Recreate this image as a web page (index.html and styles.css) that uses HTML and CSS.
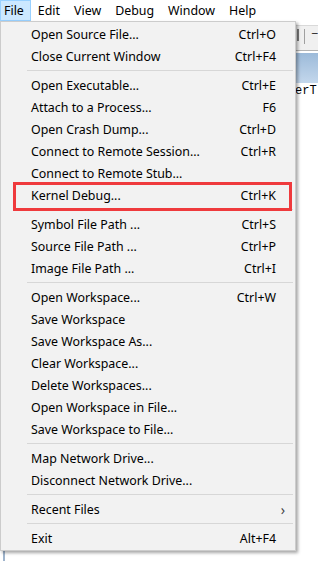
FILE: index.html
```html
<!DOCTYPE html>
<html lang="en">
<head>
    <meta charset="UTF-8">
    <title>WinDbg - File menu</title>
    <link rel="stylesheet" href="styles.css">
</head>
<body>
    <div class="menubar">
        <span class="menubar-item active">File</span>
        <span class="menubar-item">Edit</span>
        <span class="menubar-item">View</span>
        <span class="menubar-item">Debug</span>
        <span class="menubar-item">Window</span>
        <span class="menubar-item">Help</span>
    </div>

    <!-- the debugger window behind the open menu -->
    <div class="toolbar">
        <span class="tool-btn"></span>
        <span class="tool-sep"></span>
        <span class="tool-drop">&#8722;</span>
    </div>
    <div class="doc">
        <div class="doc-caption"></div>
        <div class="doc-body">erT</div>
    </div>

    <div class="dropdown">
        <div class="item"><span>Open Source File...</span><span class="key">Ctrl+O</span></div>
        <div class="item"><span>Close Current Window</span><span class="key">Ctrl+F4</span></div>
        <div class="sep"></div>
        <div class="item"><span>Open Executable...</span><span class="key">Ctrl+E</span></div>
        <div class="item"><span>Attach to a Process...</span><span class="key">F6</span></div>
        <div class="item"><span>Open Crash Dump...</span><span class="key">Ctrl+D</span></div>
        <div class="item"><span>Connect to Remote Session...</span><span class="key">Ctrl+R</span></div>
        <div class="item"><span>Connect to Remote Stub...</span></div>
        <div class="item marked"><span>Kernel Debug...</span><span class="key">Ctrl+K</span></div>
        <div class="sep"></div>
        <div class="item"><span>Symbol File Path ...</span><span class="key">Ctrl+S</span></div>
        <div class="item"><span>Source File Path ...</span><span class="key">Ctrl+P</span></div>
        <div class="item"><span>Image File Path ...</span><span class="key">Ctrl+I</span></div>
        <div class="sep"></div>
        <div class="item"><span>Open Workspace...</span><span class="key">Ctrl+W</span></div>
        <div class="item"><span>Save Workspace</span></div>
        <div class="item"><span>Save Workspace As...</span></div>
        <div class="item"><span>Clear Workspace...</span></div>
        <div class="item"><span>Delete Workspaces...</span></div>
        <div class="item"><span>Open Workspace in File...</span></div>
        <div class="item"><span>Save Workspace to File...</span></div>
        <div class="sep"></div>
        <div class="item"><span>Map Network Drive...</span></div>
        <div class="item"><span>Disconnect Network Drive...</span></div>
        <div class="sep"></div>
        <div class="item"><span>Recent Files</span><span class="arrow">&#8250;</span></div>
        <div class="sep"></div>
        <div class="item"><span>Exit</span><span class="key">Alt+F4</span></div>
    </div>
</body>
</html>
```

FILE: styles.css
```css
body {
    margin: 0;
    background: #fff;
    font-family: "Noto Sans", "Open Sans", sans-serif;
    font-size: 12.4px;
    color: #000;
    position: relative;
    height: 561px;
    overflow: hidden;
}
.menubar {
    display: flex;
    height: 21px;
    background: #fff;
}
.menubar-item {
    padding: 0 6px;
    line-height: 19px;
    border: 1px solid transparent;
}
.menubar-item.active {
    padding-left: 3px;
    padding-right: 6px;
    background: #cce8ff;
    border-color: #99d1ff;
}
.toolbar {
    margin-top: 4px;
    height: 26px;
    background: #f0f0f0;
    border-top: 1px solid #d9d9d9;
    border-bottom: 1px solid #b4b4b4;
    display: flex;
    align-items: flex-start;
    padding-top: 3px;
    padding-left: 296px;
    box-sizing: border-box;
}
.tool-btn {
    width: 3px;
    height: 12px;
    border-right: 2px solid #7a7a7a;
}
.tool-sep {
    margin-left: 5px;
    width: 1px;
    height: 15px;
    background: #a0a0a0;
}
.tool-drop {
    margin-left: 6px;
    line-height: 10px;
    color: #333;
}
.doc {
    margin-left: 3px;
    border-left: 2px solid #9fb4cc;
}
.doc-caption {
    height: 30px;
    margin-top: 2px;
    background: linear-gradient(#9cbad9, #c3d7ec);
}
.doc-body {
    height: 500px;
    padding: 0 2px;
    font-family: "Liberation Mono", monospace;
    font-size: 12px;
    line-height: 16px;
    text-indent: 288px;
    white-space: nowrap;
}
.dropdown {
    position: absolute;
    left: 0;
    top: 21px;
    width: 296px;
    box-sizing: border-box;
    padding: 1px;
    background: #f2f2f2;
    border: 1px solid #cccccc;
    box-shadow: 2px 2px 3px rgba(0, 0, 0, 0.35);
}
.item {
    display: flex;
    justify-content: space-between;
    align-items: center;
    height: 22px;
    padding: 0 18px 0 29px;
    white-space: nowrap;
}
.key {
    text-align: right;
}
.arrow {
    margin-right: -9px;
    font-size: 14px;
    color: #444;
}
.sep {
    height: 1px;
    margin: 3px 1px 3px 25px;
    background: #d7d7d7;
}
.item.marked {
    position: relative;
}
.item.marked::after {
    content: "";
    position: absolute;
    left: 11px;
    right: 2px;
    top: -2px;
    bottom: -5px;
    border: 3px solid #ef3a3d;
}
```
